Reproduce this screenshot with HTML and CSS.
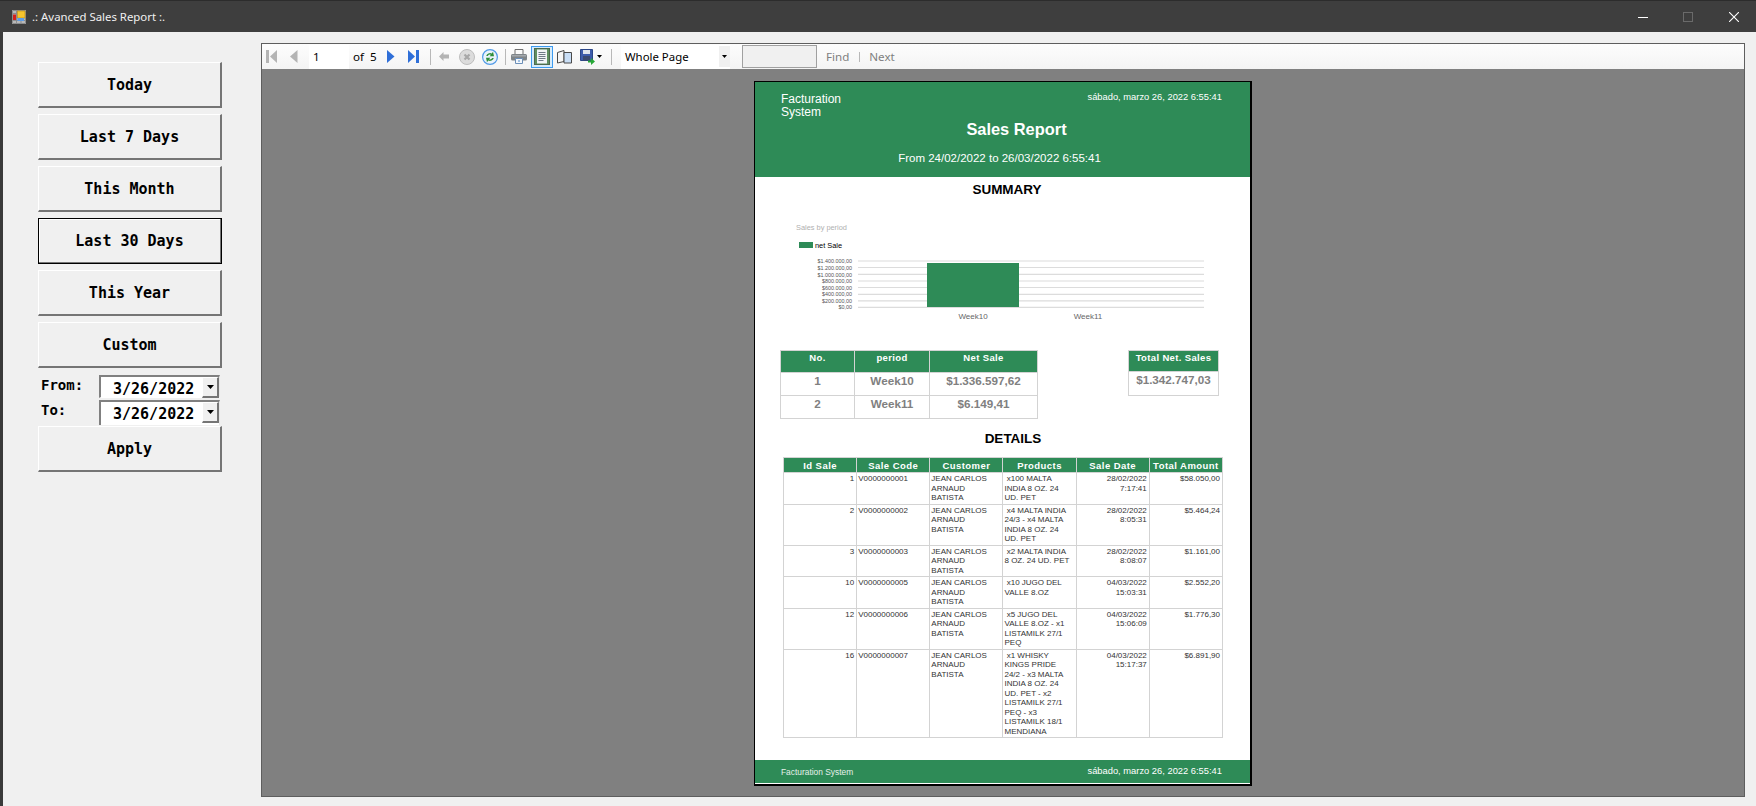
FILE: index.html
```html
<!DOCTYPE html>
<html lang="en">
<head>
<meta charset="utf-8">
<title>.: Avanced Sales Report :.</title>
<link rel="stylesheet" href="styles.css">
</head>
<body>
<div class="window">
  <header class="titlebar">
    <svg class="app-icon" viewBox="0 0 14 14" width="14" height="14">
      <rect x="0" y="0" width="14" height="14" fill="#b8b8b8"/>
      <path d="M.5.5h13v13H.5zM4.500 0v14M.5 3.500h4M.5 10.500h13M9 10.500v3" stroke="#8c8c8c" fill="none"/>
      <rect x="5.500" y="1" width="7.500" height="7" fill="#f6c52e" stroke="#c08f14" stroke-width=".7"/>
      <rect x="1" y="4.500" width="3" height="5.500" fill="#d3211c"/>
      <rect x="5.500" y="8" width="6.500" height="3" fill="#5b9ce6"/>
    </svg>
    <span class="title-text">.: Avanced Sales Report :.</span>
    <div class="window-controls">
      <svg class="wc-min" viewBox="0 0 10 10" width="10" height="10"><path d="M0 5.500h10" stroke="#fff"/></svg>
      <svg class="wc-max" viewBox="0 0 10 10" width="10" height="10"><rect x=".5" y=".5" width="9" height="9" fill="none" stroke="#6a6a6a"/></svg>
      <svg class="wc-close" viewBox="0 0 10 10" width="10" height="10"><path d="M0 0l10 10M10 0L0 10" stroke="#fff" stroke-width="1.100"/></svg>
    </div>
  </header>

  <div class="workspace">
    <aside class="sidebar">
      <button class="cmd">Today</button>
      <button class="cmd">Last 7 Days</button>
      <button class="cmd">This Month</button>
      <button class="cmd cmd-active">Last 30 Days</button>
      <button class="cmd">This Year</button>
      <button class="cmd">Custom</button>
      <div class="dates">
        <div class="date-row">
          <span class="date-label">From:</span>
          <div class="date-box"><span class="date-value">3/26/2022</span><span class="date-drop"><svg viewBox="0 0 7 4" width="7" height="4"><path d="M0 0h7L3.500 4z" fill="#000"/></svg></span></div>
        </div>
        <div class="date-row date-row-clipped">
          <span class="date-label">To:</span>
          <div class="date-box"><span class="date-value">3/26/2022</span><span class="date-drop"><svg viewBox="0 0 7 4" width="7" height="4"><path d="M0 0h7L3.500 4z" fill="#000"/></svg></span></div>
        </div>
      </div>
      <button class="cmd">Apply</button>
    </aside>

    <main class="viewer">
      <div class="toolbar">
        <svg class="ti ti-first" viewBox="0 0 12 13" width="12" height="13"><path d="M0 0h3v13H0z" fill="#b4b4b4"/><path d="M11 0v13L4 6.500z" fill="#b4b4b4"/></svg>
        <svg class="ti ti-prev" viewBox="0 0 8 13" width="8" height="13"><path d="M7.500 0v13L0 6.500z" fill="#b4b4b4"/></svg>
        <span class="page-input">1</span>
        <span class="tb-text ti-of">of&nbsp;&nbsp;5</span>
        <svg class="ti ti-next" viewBox="0 0 8 13" width="8" height="13"><path d="M0 0v13l7.500-6.500z" fill="#2f6fd8"/></svg>
        <svg class="ti ti-last" viewBox="0 0 11 13" width="11" height="13"><path d="M0 0v13l7-6.500z" fill="#2f6fd8"/><path d="M8 0h3v13H8z" fill="#2f6fd8"/></svg>
        <span class="sep sep-a"></span>
        <svg class="ti ti-back" viewBox="0 0 10 9" width="10" height="9"><path d="M0 4.500L4.500 0v2.500H10v4H4.500V9z" fill="#b4b4b4"/></svg>
        <svg class="ti ti-stop" viewBox="0 0 16 16" width="16" height="16"><circle cx="8" cy="8" r="7.500" fill="#dcdcdc" stroke="#bdbdbd"/><path d="M5.500 5.500l5 5M10.500 5.500l-5 5" stroke="#a8a8a8" stroke-width="2.200"/></svg>
        <svg class="ti ti-refresh" viewBox="0 0 16 16" width="16" height="16"><circle cx="8" cy="8" r="7.400" fill="#eaf2fb" stroke="#4f9ae6" stroke-width="1.200"/><path d="M4.200 7a4 4 0 0 1 5.600-2.600L11 2.800l1 4.400H7.700l1.200-1.400A2.600 2.600 0 0 0 5.800 7z" fill="#2f8f3a"/><path d="M11.800 9a4 4 0 0 1-5.600 2.600L5 13.200l-1-4.400h4.300l-1.200 1.400A2.600 2.600 0 0 0 10.200 9z" fill="#2f8f3a"/></svg>
        <span class="sep sep-b"></span>
        <svg class="ti ti-print" viewBox="0 0 16 15" width="16" height="15"><path d="M4 .5h8v5H4z" fill="#fafafa" stroke="#6f6f6f"/><rect y="5" width="16" height="6.500" rx="1.500" fill="#7e8488"/><rect x="1" y="6" width="14" height="1.500" fill="#a4a8ac"/><path d="M4.500 9.500h7v5h-7z" fill="#f4f8fc" stroke="#6c8fb8"/><path d="M7 12h2" stroke="#4f8ad0"/></svg>
        <span class="page-toggle"><svg viewBox="0 0 16 17" width="16" height="17"><rect x=".5" y=".5" width="15" height="16" fill="#5f8f62" stroke="#4c6a50"/><rect x="3" y="1.500" width="10" height="14" fill="#f2f5f8"/><path d="M4.500 4.500h7M4.500 6.500h7M4.500 8.500h7M4.500 10.500h7M4.500 12.500h5" stroke="#6f7a88"/></svg></span>
        <svg class="ti ti-book" viewBox="0 0 15 14" width="15" height="14"><path d="M.5 2.500L7 .5v11L.5 13z" fill="#f6f6f6" stroke="#4a4a4a"/><path d="M7 2.500h7.500V13H7z" fill="#c9def6" stroke="#4a4a4a"/></svg>
        <svg class="ti ti-save" viewBox="0 0 15 16" width="15" height="16"><path d="M.5.5h12v11H.5z" fill="#3d5cab" stroke="#2b4688"/><rect x="3" y="1" width="7" height="4" fill="#dfe5ee"/><rect x="3" y="7" width="7" height="4.500" fill="#3a4a70"/><path d="M8 11.500h3V9l4 3.500-4 3.500v-2.500H8z" fill="#26a836"/></svg>
        <svg class="ti ti-drop" viewBox="0 0 5 3" width="5" height="3"><path d="M0 0h5L2.500 3z" fill="#000"/></svg>
        <span class="sep sep-c"></span>
        <div class="zoom-combo"><span class="zoom-text">Whole Page</span><span class="zoom-drop"><svg viewBox="0 0 5 3" width="5" height="3"><path d="M0 0h5L2.500 3z" fill="#000"/></svg></span></div>
        <span class="find-box"></span>
        <span class="tb-link ti-find">Find</span>
        <span class="sep sep-d"></span>
        <span class="tb-link ti-nxt">Next</span>
      </div>

      <div class="canvas">
        <article class="page">
          <header class="rep-head">
            <div class="rep-head-top">
              <span class="rep-brand">Facturation<br>System</span>
              <span class="rep-stamp">sábado, marzo 26, 2022 6:55:41</span>
            </div>
            <div class="rep-title">Sales Report</div>
            <div class="rep-range">From 24/02/2022 to 26/03/2022 6:55:41</div>
          </header>

          <h2 class="rep-section rep-summary">SUMMARY</h2>

          <svg class="chart" viewBox="0 0 495 122" width="495" height="122">
            <text class="c-title" x="41" y="30">Sales by period</text>
            <rect x="44" y="42" width="14" height="6" fill="#2e8b57"/>
            <text class="c-legend" x="60" y="48">net Sale</text>
            <g class="c-grid">
              <path d="M103 61h346M103 67.500h346M103 74.300h346M103 81h346M103 87.500h346M103 94.300h346M103 100.800h346M103 107.300h346"/>
            </g>
            <g class="c-axis">
              <text x="97" y="63">$1.400.000,00</text>
              <text x="97" y="70">$1.200.000,00</text>
              <text x="97" y="76.500">$1.000.000,00</text>
              <text x="97" y="83">$800.000,00</text>
              <text x="97" y="89.500">$600.000,00</text>
              <text x="97" y="96">$400.000,00</text>
              <text x="97" y="103">$200.000,00</text>
              <text x="97" y="109">$0,00</text>
            </g>
            <rect x="172" y="63" width="92" height="44" fill="#2e8b57"/>
            <text class="c-cat" x="218" y="119">Week10</text>
            <text class="c-cat" x="333" y="119">Week11</text>
          </svg>

          <section class="summary-row">
            <table class="sum-table">
              <colgroup><col class="sc-no"><col class="sc-per"><col class="sc-net"></colgroup>
              <thead><tr><th>No.</th><th>period</th><th>Net Sale</th></tr></thead>
              <tbody>
                <tr><td>1</td><td>Week10</td><td>$1.336.597,62</td></tr>
                <tr><td>2</td><td>Week11</td><td>$6.149,41</td></tr>
              </tbody>
            </table>
            <table class="sum-table total-table">
              <thead><tr><th>Total Net. Sales</th></tr></thead>
              <tbody><tr><td>$1.342.747,03</td></tr></tbody>
            </table>
          </section>

          <h2 class="rep-section rep-details">DETAILS</h2>

          <table class="det-table">
            <thead>
              <tr><th>Id Sale</th><th>Sale Code</th><th>Customer</th><th>Products</th><th>Sale Date</th><th>Total Amount</th></tr>
            </thead>
            <tbody>
              <tr><td class="r">1</td><td>V0000000001</td><td>JEAN CARLOS<br>ARNAUD<br>BATISTA</td><td>&nbsp;x100 MALTA<br>INDIA 8 OZ. 24<br>UD. PET</td><td class="r">28/02/2022<br>7:17:41</td><td class="r">$58.050,00</td></tr>
              <tr><td class="r">2</td><td>V0000000002</td><td>JEAN CARLOS<br>ARNAUD<br>BATISTA</td><td>&nbsp;x4 MALTA INDIA<br>24/3 - x4 MALTA<br>INDIA 8 OZ. 24<br>UD. PET</td><td class="r">28/02/2022<br>8:05:31</td><td class="r">$5.464,24</td></tr>
              <tr><td class="r">3</td><td>V0000000003</td><td>JEAN CARLOS<br>ARNAUD<br>BATISTA</td><td>&nbsp;x2 MALTA INDIA<br>8 OZ. 24 UD. PET</td><td class="r">28/02/2022<br>8:08:07</td><td class="r">$1.161,00</td></tr>
              <tr><td class="r">10</td><td>V0000000005</td><td>JEAN CARLOS<br>ARNAUD<br>BATISTA</td><td>&nbsp;x10 JUGO DEL<br>VALLE 8.OZ</td><td class="r">04/03/2022<br>15:03:31</td><td class="r">$2.552,20</td></tr>
              <tr><td class="r">12</td><td>V0000000006</td><td>JEAN CARLOS<br>ARNAUD<br>BATISTA</td><td>&nbsp;x5 JUGO DEL<br>VALLE 8.OZ - x1<br>LISTAMILK 27/1<br>PEQ</td><td class="r">04/03/2022<br>15:06:09</td><td class="r">$1.776,30</td></tr>
              <tr><td class="r">16</td><td>V0000000007</td><td>JEAN CARLOS<br>ARNAUD<br>BATISTA</td><td>&nbsp;x1 WHISKY<br>KINGS PRIDE<br>24/2 - x3 MALTA<br>INDIA 8 OZ. 24<br>UD. PET - x2<br>LISTAMILK 27/1<br>PEQ - x3<br>LISTAMILK 18/1<br>MENDIANA</td><td class="r">04/03/2022<br>15:17:37</td><td class="r">$6.891,90</td></tr>
            </tbody>
          </table>

          <footer class="rep-foot">
            <span class="rep-foot-name">Facturation System</span>
            <span class="rep-stamp">sábado, marzo 26, 2022 6:55:41</span>
          </footer>
        </article>
      </div>
    </main>
  </div>
</div>
</body>
</html>
```

FILE: styles.css
```css
* { box-sizing: border-box; }
html, body { margin: 0; padding: 0; height: 100%; overflow: hidden; }
body { background: #f0f0f0; font-family: "Liberation Sans", Arial, sans-serif; }

.window { width: 1756px; height: 806px; display: flex; flex-direction: column; border-left: 3px solid #3a3a3a; }

/* title bar */
.titlebar { height: 32px; margin-left: -3px; flex: none; display: flex; align-items: center; background: #3e3e3e; border-top: 1px solid #2c2c2c; padding-left: 12px; color: #f0f0f0; font: 11.400px "Noto Sans", "Open Sans", sans-serif; }
.app-icon { flex: none; }
.title-text { margin-left: 6px; }
.window-controls { margin-left: auto; display: flex; align-items: center; padding-right: 17px; }
.wc-min { margin-right: 35px; }
.wc-max { margin-right: 36px; }

/* layout */
.workspace { flex: 1; display: flex; min-height: 0; padding: 11px 11px 9px 0; }

/* left column */
.sidebar { width: 258px; flex: none; padding: 19px 0 0 35px; display: flex; flex-direction: column; gap: 6px; align-items: flex-start; }
.cmd { width: 184px; height: 46px; flex: none; padding: 0; background: #f0f0f0; color: #000; font: bold 15px "DejaVu Sans Mono", "Liberation Mono", monospace; border-style: solid; border-width: 1px 2px 2px 1px; border-color: #fff #757575 #757575 #fff; }
.cmd-active { outline: 1px solid #000; outline-offset: -1px; border-color: #000 #757575 #757575 #000; box-shadow: inset 1px 1px 0 #fff; }

.dates { display: flex; flex-direction: column; width: 184px; margin-top: 1px; margin-bottom: -5px; }
.date-row { display: flex; height: 23px; margin-bottom: 2px; }
.date-row-clipped { height: 25px; margin-bottom: 0; overflow: hidden; }
.date-label { width: 61px; padding: 2px 0 0 3px; font: bold 14px/16px "DejaVu Sans Mono", "Liberation Mono", monospace; color: #000; }
.date-box { width: 121px; height: 26px; flex: none; display: flex; background: #fff; border-style: solid; border-width: 2px 1px 0 2px; border-color: #808080 #e8e8e8 #fff #808080; }
.date-row:first-child .date-box { height: 23px; border-bottom-width: 1px; }
.date-value { flex: 1; padding: 3px 0 0 12px; font: bold 15px/18px "DejaVu Sans Mono", "Liberation Mono", monospace; }
.date-drop { width: 17px; height: 21px; background: #f0f0f0; border-style: solid; border-width: 1px 2px 2px 1px; border-color: #fff #757575 #757575 #fff; display: flex; align-items: center; justify-content: center; }

/* report viewer */
.viewer { flex: 1; min-width: 0; display: flex; flex-direction: column; border: 1px solid #5e5e5e; background: #808080; }
.toolbar { height: 25px; flex: none; display: flex; align-items: center; background: linear-gradient(#fdfdfd, #f4f4f4); padding-left: 4px; }
.ti { flex: none; display: block; }
.ti-prev { margin-left: 12px; }
.page-input { width: 40px; height: 24px; margin-left: 11px; background: #fff; font: 11.600px/24px "Noto Sans", sans-serif; padding-left: 4px; color: #000; }
.tb-text { font: 11.600px "Noto Sans", sans-serif; color: #000; }
.ti-of { margin-left: 4px; width: 25px; white-space: nowrap; }
.ti-next { margin-left: 9px; }
.ti-last { margin-left: 13px; }
.sep { width: 1px; height: 16px; flex: none; background: #b8b8b8; }
.sep-a { margin-left: 11px; }
.ti-back { margin-left: 8px; }
.ti-stop { margin-left: 10px; }
.ti-refresh { margin-left: 7px; }
.sep-b { margin-left: 7px; }
.ti-print { margin-left: 5px; }
.page-toggle { width: 22px; height: 22px; margin-left: 4px; flex: none; display: flex; align-items: center; justify-content: center; background: #d6ebfb; border: 1px solid #3d9bf0; }
.ti-book { margin-left: 4px; }
.ti-save { margin-left: 8px; }
.ti-drop { margin-left: 2px; }
.sep-c { margin-left: 9px; }
.zoom-combo { width: 109px; height: 24px; margin-left: 9px; flex: none; display: flex; background: #fff; align-items: center; }
.zoom-text { flex: 1; padding-left: 4px; font: 11.400px "Noto Sans", sans-serif; color: #000; }
.zoom-drop { width: 11px; height: 21px; background: #f0f0f0; display: flex; align-items: center; justify-content: center; }
.find-box { width: 75px; height: 23px; margin-left: 12px; flex: none; background: #f0f0f0; border: 1px solid #a0a0a0; }
.tb-link { font: 11.600px "Noto Sans", sans-serif; color: #7f7f7f; }
.ti-find { margin-left: 9px; }
.sep-d { height: 10px; margin-left: 10px; }
.ti-nxt { margin-left: 9px; }

.canvas { flex: 1; min-height: 0; display: flex; justify-content: center; align-items: flex-start; padding-top: 12px; }

/* the report page */
.page { width: 498px; height: 705px; flex: none; display: flex; flex-direction: column; background: #fff; border-style: solid; border-width: 1px 2px 2px 1px; border-color: #000; color: #000; }
.rep-head { height: 95px; flex: none; background: #2e8b57; color: #fff; padding-top: 11px; text-align: center; }
.rep-head-top { height: 26px; display: flex; justify-content: space-between; padding: 0 28px 0 26px; text-align: left; }
.rep-brand { font-size: 12px; line-height: 13px; }
.rep-stamp { font-size: 9.350px; line-height: 11px; color: #fff; margin-top: -1px; }
.rep-title { font-size: 16.400px; font-weight: bold; line-height: 20px; margin-left: 28px; }
.rep-range { font-size: 11.500px; line-height: 16px; margin: 11px 6px 0 0; }

.rep-section { margin: 0; text-align: center; font-size: 13.500px; line-height: 16px; font-weight: bold; }
.rep-summary { margin: 5px 0 0 9px; }
.rep-details { margin: 12px 0 0 21px; }

.chart { display: block; flex: none; margin-top: 2px; }
.c-title { font-size: 7.400px; fill: #b0b0b0; }
.c-legend { font-size: 7.400px; fill: #000; }
.c-grid path { stroke: #dcdcdc; stroke-width: 1.200; fill: none; }
.c-axis text { font-size: 5.400px; fill: #555; text-anchor: end; }
.c-cat { font-size: 8px; fill: #666; text-anchor: middle; }

.summary-row { display: flex; justify-content: space-between; align-items: flex-start; margin: 28px 31px 0 25px; }
.sum-table { border-collapse: collapse; table-layout: fixed; width: 257px; flex: none; }
.sc-no { width: 74px; }
.sc-per { width: 75px; }
.sc-net { width: 108px; }
.sum-table th { height: 22px; padding: 1px 0 0; vertical-align: top; background: #2e8b57; color: #fff; font-size: 9.500px; letter-spacing: .35px; line-height: 11px; border: 1px solid #d3d3d3; }
.sum-table td { height: 23px; padding: 0; vertical-align: top; text-align: center; color: #808080; font-size: 11.700px; font-weight: bold; line-height: 15px; border: 1px solid #d3d3d3; }
.total-table { width: 91px; }
.total-table th { height: 21px; }
.total-table td { height: 24px; }

.det-table { margin: 10px 0 0 28px; width: 440px; flex: none; border-collapse: collapse; table-layout: fixed; }
.det-table th { height: 15px; padding: 0; background: #2e8b57; color: #fff; font-size: 9.500px; letter-spacing: .45px; line-height: 11px; font-weight: bold; border: 1px solid #d3d3d3; white-space: nowrap; }
.det-table td { padding: 1px 1px 1px 1px; vertical-align: top; font-size: 8px; line-height: 9.500px; color: #333; border: 1px solid #d3d3d3; white-space: nowrap; }
.det-table td.r { text-align: right; padding-right: 2px; }

.rep-foot { margin-top: auto; height: 24px; flex: none; background: #2e8b57; border-bottom: 1px solid #fff; color: #fff; display: flex; justify-content: space-between; align-items: center; padding: 0 28px 0 26px; }
.rep-foot-name { font-size: 8.400px; color: #e6f0ea; }
```
